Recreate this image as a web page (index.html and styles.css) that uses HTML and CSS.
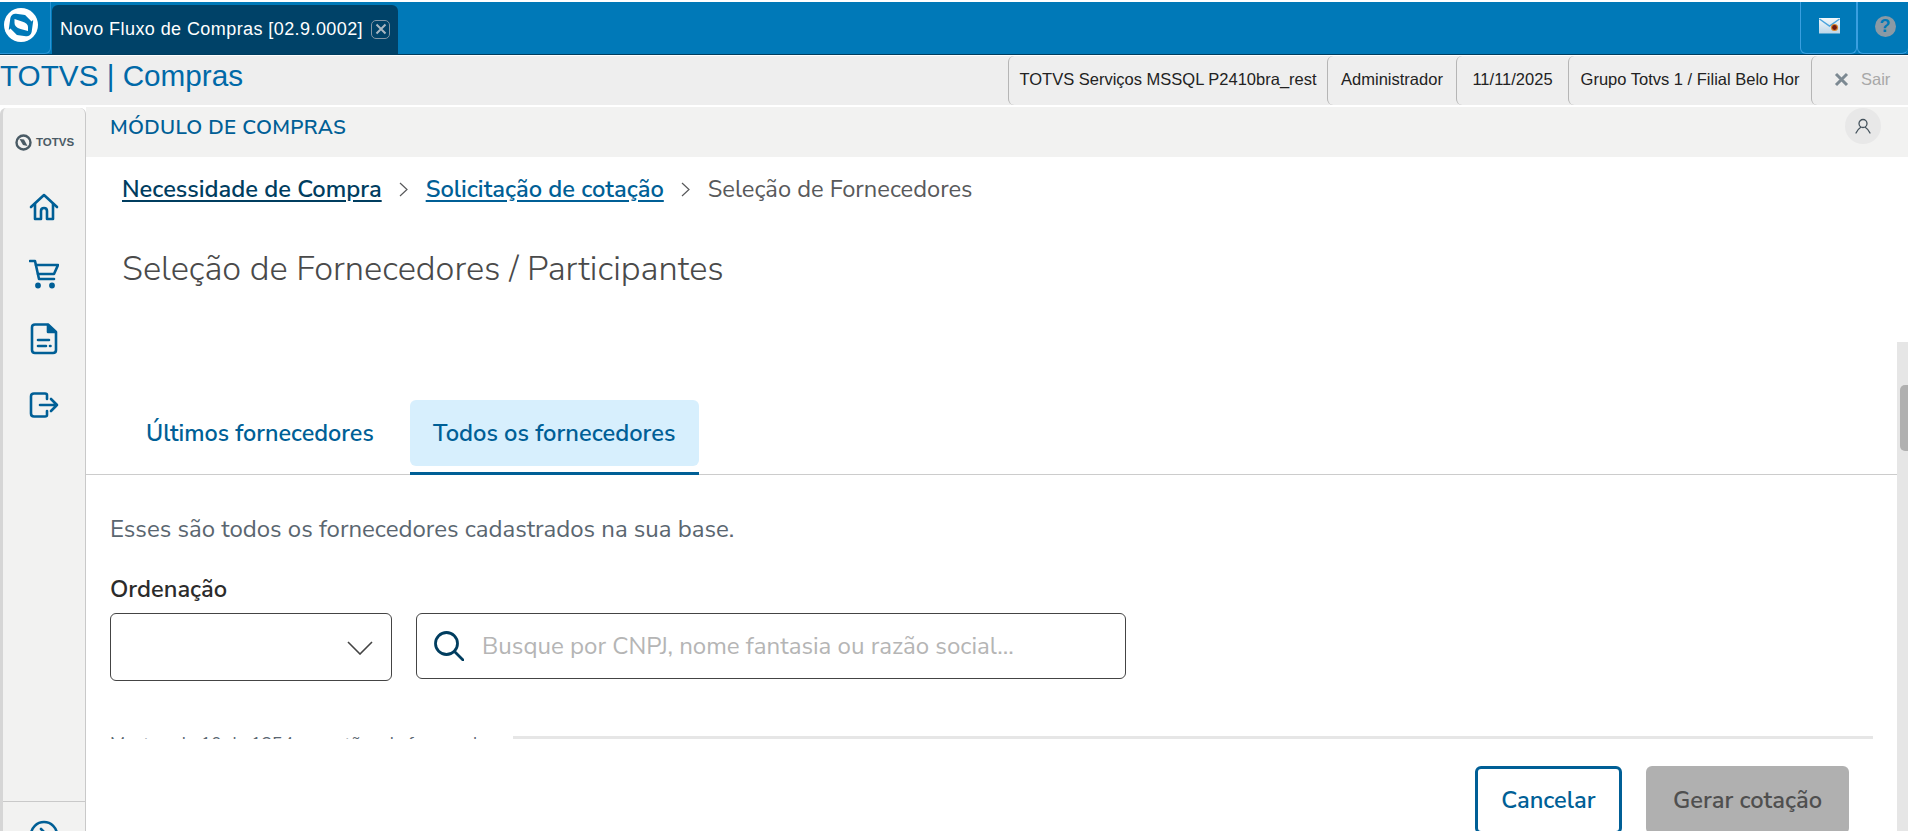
FILE: index.html
```html
<!DOCTYPE html>
<html lang="pt-BR">
<head>
<meta charset="utf-8">
<title>TOTVS | Compras</title>
<link rel="stylesheet" href="styles.css">
</head>
<body>
<header class="topbar">
  <div class="logo-box">
    <svg width="42" height="42" viewBox="0 0 42 42"><circle cx="21" cy="21" r="17" fill="#fff"/><rect x="9.500" y="10.500" width="23" height="21" rx="5" fill="#0079b8" transform="rotate(8 21 21)"/><path d="M14.500 15 L22 17.500 Q28 19 28 23 L28 27 L20.500 25 Q14.500 23 14.500 19 Z" fill="#fff"/><path d="M24 7 L33 16 M18 35 L9 26" stroke="#fff" stroke-width="4"/></svg>
  </div>
  <div class="app-tab">
    <span>Novo Fluxo de Compras [02.9.0002]</span>
    <span class="tab-close"><svg width="12" height="12" viewBox="0 0 12 12"><path d="M1.500 1.500 L10.500 10.500 M10.500 1.500 L1.500 10.500" stroke="#a9b7c2" stroke-width="2"/></svg></span>
  </div>
  <div class="top-actions">
    <div class="top-btn top-btn-mail">
      <svg width="22" height="16" viewBox="0 0 22 16"><defs><linearGradient id="mailfill" x1="0" y1="0" x2="0" y2="1"><stop offset="0" stop-color="#f4f8fb"/><stop offset="1" stop-color="#bcd6e8"/></linearGradient></defs><rect width="21" height="15.500" fill="url(#mailfill)"/><path d="M0.500 1 L10.500 8 L20.500 1" fill="none" stroke="#4aa3dc" stroke-width="1.500"/><circle cx="15.500" cy="9.500" r="3.600" fill="#d9862f"/><circle cx="15.500" cy="9.500" r="2.400" fill="#6e1a12"/></svg>
    </div>
    <div class="top-btn top-btn-help">
      <span class="help-dot">?</span>
    </div>
  </div>
</header>
<div class="infobar">
  <div class="brand">TOTVS | Compras</div>
  <div class="info-cells">
    <div class="cell cell-env">TOTVS Serviços MSSQL P2410bra_rest</div>
    <div class="cell cell-user">Administrador</div>
    <div class="cell cell-date">11/11/2025</div>
    <div class="cell cell-branch">Grupo Totvs 1 / Filial Belo Hor</div>
    <div class="cell cell-exit"><svg width="15" height="15" viewBox="0 0 15 15"><path d="M2 2 L13 13 M13 2 L2 13" stroke="#7c8992" stroke-width="3"/></svg><span class="exit-label">Sair</span></div>
  </div>
</div>
<div class="workspace">
  <aside class="sidebar">
    <div class="side-logo">
      <svg width="17" height="17" viewBox="0 0 17 17"><circle cx="8.500" cy="8.500" r="7" fill="none" stroke="#4a5b65" stroke-width="2.400"/><path d="M4.500 5 L9 5.500 L12.500 12 L8 11 Z" fill="#4a5b65"/></svg>
      <span>TOTVS</span>
    </div>
    <nav class="side-nav">
      <svg class="side-icon" width="30" height="30" viewBox="0 0 30 30" fill="none" stroke="#005f96" stroke-width="2.600" stroke-linejoin="round" stroke-linecap="round"><path d="M2 15 L15 3 L28 15"/><path d="M6 12 V27 H12 V19 Q12 16 15 16 Q18 16 18 19 V27 H24 V12"/></svg>
      <svg class="side-icon" width="30" height="30" viewBox="0 0 30 30" fill="none" stroke="#005f96" stroke-width="2.600" stroke-linejoin="round" stroke-linecap="round"><path d="M1 2 H6 L10 20 H25"/><path d="M7 6 H29 L25 15 H9"/><circle cx="9" cy="26.500" r="1.600" fill="#005f96"/><circle cx="23" cy="26.500" r="1.600" fill="#005f96"/></svg>
      <svg class="side-icon" width="30" height="32" viewBox="0 0 30 32" fill="none" stroke="#005f96" stroke-width="2.600" stroke-linejoin="round" stroke-linecap="round"><path d="M6 1.500 H19 L27 9 V27 Q27 30 24 30 H6 Q3 30 3 27 V4.500 Q3 1.500 6 1.500 Z"/><path d="M19 2 V9 H26" fill="#005f96"/><path d="M9 17 H20 M9 23 H17 M21 23 H21.500"/></svg>
      <svg class="side-icon" width="30" height="26" viewBox="0 0 30 26" fill="none" stroke="#005f96" stroke-width="2.600" stroke-linejoin="round" stroke-linecap="round"><path d="M18 7 V3 Q18 1.500 16 1.500 H5 Q2 1.500 2 4.500 V21.500 Q2 24.500 5 24.500 H16 Q18 24.500 18 23 V19"/><path d="M11 13 H28 M22 7 L28 13 L22 19"/></svg>
    </nav>
    <div class="side-foot">
      <svg width="30" height="30" viewBox="0 0 30 30" fill="none" stroke="#005f96" stroke-width="2.600" stroke-linecap="round" stroke-linejoin="round"><circle cx="15" cy="15" r="13"/><path d="M12 9 L18 15 L12 21"/></svg>
    </div>
  </aside>
  <main class="main">
    <div class="module-bar">
      <span class="module-title">MÓDULO DE COMPRAS</span>
      <span class="avatar"><svg width="16" height="16" viewBox="0 0 16 16" fill="none" stroke="#44525c" stroke-width="1.300" stroke-linecap="round"><circle cx="8" cy="5.500" r="4"/><path d="M1 15 Q3 11 5.500 9.500 M15 15 Q13 11 10.500 9.500"/></svg></span>
    </div>
    <nav class="breadcrumb">
      <a class="crumb crumb-first">Necessidade de Compra</a>
      <svg class="crumb-sep" width="9" height="15" viewBox="0 0 9 15" fill="none" stroke="#58595b" stroke-width="1.200"><path d="M1 1 L8 7.500 L1 14"/></svg>
      <a class="crumb crumb-link">Solicitação de cotação</a>
      <svg class="crumb-sep" width="9" height="15" viewBox="0 0 9 15" fill="none" stroke="#58595b" stroke-width="1.200"><path d="M1 1 L8 7.500 L1 14"/></svg>
      <span class="crumb crumb-current">Seleção de Fornecedores</span>
    </nav>
    <h1 class="page-title">Seleção de Fornecedores / Participantes</h1>
    <div class="tabs">
      <div class="tab">Últimos fornecedores</div>
      <div class="tab tab-active">Todos os fornecedores</div>
    </div>
    <section class="panel">
      <p class="lead">Esses são todos os fornecedores cadastrados na sua base.</p>
      <div class="field-label">Ordenação</div>
      <div class="filters">
        <div class="select">
          <svg width="26" height="14" viewBox="0 0 26 14" fill="none" stroke="#444" stroke-width="1.600"><path d="M1 1 L13 13 L25 1"/></svg>
        </div>
        <div class="search">
          <svg width="30" height="30" viewBox="0 0 30 30" fill="none" stroke="#003d5f" stroke-width="2.800" stroke-linecap="round"><circle cx="12.500" cy="12.500" r="11"/><path d="M20.500 20.500 L29 29"/></svg>
          <span class="placeholder">Busque por CNPJ, nome fantasia ou razão social...</span>
        </div>
      </div>
      <div class="results">
        <span class="results-text">Mostrando 10 de 1854 sugestões de fornecedores</span>
        <span class="results-line"></span>
      </div>
      <div class="actions">
        <button class="btn btn-outline">Cancelar</button>
        <button class="btn btn-disabled">Gerar cotação</button>
      </div>
    </section>
    <div class="scrollbar"><div class="scroll-thumb"></div></div>
  </main>
</div>
</body>
</html>
```
FILE: styles.css
```css
* { box-sizing: border-box; }
html, body { margin: 0; height: 831px; overflow: hidden; background: #fff; }
body {
  display: flex;
  flex-direction: column;
  padding-top: 2px;
  font-family: "Nunito Sans", "Noto Sans", sans-serif;
  color: #333;
}
.topbar {
  height: 53px;
  flex: none;
  display: flex;
  background: #0079b8;
  border-bottom: 1px solid #003d5f;
}
.logo-box {
  width: 51px;
  display: flex;
  align-items: center;
  justify-content: flex-start;
  padding-bottom: 5px;
  border-right: 1px solid #2b95d6;
  border-bottom: 1px solid #2b95d6;
  border-bottom-right-radius: 6px;
}
.app-tab {
  margin: 3px 0 0 1px;
  width: 346px;
  display: flex;
  align-items: center;
  gap: 8px;
  padding-left: 8px;
  padding-bottom: 1px;
  background: #004268;
  border-radius: 6px 6px 0 0;
  color: #fff;
  font: 18px "Liberation Sans", sans-serif;
}
.app-tab > span:first-child { letter-spacing: 0.42px; white-space: nowrap; }
.tab-close {
  width: 19px;
  height: 19px;
  flex: none;
  display: flex;
  align-items: center;
  justify-content: center;
  border: 1px solid #8496a5;
  border-radius: 5px;
}
.top-actions { margin-left: auto; display: flex; }
.top-btn {
  width: 57px;
  display: flex;
  align-items: center;
  justify-content: center;
  border: 1px solid #3a9fe0;
  border-top: 0;
  border-radius: 0 0 6px 6px;
}
.top-btn-mail { padding: 0 0 4px 3px; }
.top-btn-help { width: 51px; border-right: 0; padding: 0 0 3px 4px; }
.help-dot {
  width: 21px;
  height: 21px;
  border-radius: 50%;
  background: #8a9aa5;
  color: #0079b8;
  font: bold 18px/21px "Liberation Sans", sans-serif;
  text-align: center;
}
.infobar {
  margin-top: 1px;
  height: 49px;
  flex: none;
  display: flex;
  justify-content: space-between;
  background: #eee;
}
.brand {
  font: 29.700px/40px "Liberation Sans", sans-serif;
  color: #0069a8;
  white-space: nowrap;
}
.info-cells { display: flex; font: 16.500px "Liberation Sans", sans-serif; color: #222; }
.cell {
  display: flex;
  align-items: center;
  justify-content: center;
  padding-bottom: 2px;
  border-left: 1px solid #b5b5b5;
  border-radius: 6px 0 0 6px;
  white-space: nowrap;
}
.cell-env { width: 319px; }
.cell-user { width: 129px; }
.cell-date { width: 112px; }
.cell-branch { width: 243px; }
.cell-exit { width: 97px; justify-content: flex-start; padding-left: 22px; gap: 12px; color: #a8a8a8; }
.workspace {
  margin-top: 2px;
  flex: 1;
  min-height: 0;
  display: flex;
}
.sidebar {
  width: 86px;
  flex: none;
  margin-top: 1px;
  display: flex;
  flex-direction: column;
  background: #f2f2f1;
  border-left: 3px solid #d6d6d6;
  border-right: 1px solid #c9c9c9;
  border-radius: 6px 6px 0 0;
}
.side-logo {
  height: 84px;
  padding: 0 0 16px 12px;
  display: flex;
  align-items: center;
  gap: 4px;
  font: bold 11.500px "Liberation Sans", sans-serif;
  color: #4a5b65;
}
.side-nav {
  display: flex;
  flex-direction: column;
  align-items: center;
  gap: 33px;
  flex: 1;
  padding-top: 0;
}
.side-icon { display: block; }
.side-nav svg:nth-child(2) { margin-top: 4px; }
.side-nav svg:nth-child(3) { margin-top: 1px; }
.side-nav svg:nth-child(4) { margin-top: 4px; }
.side-foot {
  border-top: 1px solid #c9c9c9;
  padding-top: 18px;
  height: 60px;
  flex: none;
  margin-bottom: -30px;
  display: flex;
  justify-content: center;
}
.main {
  position: relative;
  flex: 1;
  min-width: 0;
  display: flex;
  flex-direction: column;
}
.module-bar {
  height: 50px;
  flex: none;
  display: flex;
  align-items: center;
  justify-content: space-between;
  padding: 0 27px 0 24px;
  background: #f2f2f1;
}
.module-title { font-size: 20.600px; font-weight: 600; color: #005f96; letter-spacing: 0.3px; padding-bottom: 10px; }
.avatar {
  width: 36px;
  height: 36px;
  border-radius: 50%;
  background: #e8e8e8;
  display: flex;
  align-items: center;
  justify-content: center;
  margin-top: -12px;
}
.breadcrumb {
  height: 64px;
  flex: none;
  display: flex;
  align-items: center;
  padding: 0 0 0 36px;
  font-size: 23.700px;
}
.crumb { white-space: nowrap; }
.crumb-sep { margin: 0 18px 0 17px; }
.crumb-first { color: #003d5f; font-weight: 600; text-decoration: underline; text-underline-offset: 3px; }
.crumb-link { color: #005f96; font-weight: 600; text-decoration: underline; text-underline-offset: 3px; }
.crumb-current { color: #58595b; }
.page-title {
  margin: 0 0 0 36px;
  height: 179px;
  font-size: 34.400px;
  font-weight: 300;
  line-height: 96px;
  color: #4a4a4a;
  white-space: nowrap;
}
.tabs {
  height: 75px;
  flex: none;
  display: flex;
  padding-left: 36px;
  gap: 12px;
  border-bottom: 1px solid #ccc;
}
.tab {
  height: 66px;
  padding: 0 24px;
  display: flex;
  align-items: center;
  font-size: 23.400px;
  font-weight: 600;
  color: #005f96;
  white-space: nowrap;
  border-radius: 6px;
}
.tab-active {
  position: relative;
  background: #d7effd;
  width: 289px;
  justify-content: center;
  padding: 0;
  font-size: 23.700px;
}
.tab-active::after {
  content: "";
  position: absolute;
  left: 0;
  right: 0;
  bottom: -9px;
  height: 3px;
  background: #005f96;
}
.panel { padding: 0 35px 0 24px; flex: 1; min-height: 0; }
.lead { margin: 37px 0 0; font-size: 24px; line-height: 34px; color: #5a6670; white-space: nowrap; }
.field-label { margin-top: 28px; font-size: 23.700px; font-weight: 600; line-height: 30px; color: #2b2b2b; }
.filters { margin-top: 9px; display: flex; align-items: flex-start; gap: 24px; }
.select {
  width: 282px;
  height: 68px;
  display: flex;
  align-items: center;
  justify-content: flex-end;
  padding: 2px 18px 0 0;
  border: 1px solid #444;
  border-radius: 6px;
}
.search {
  width: 710px;
  height: 66px;
  display: flex;
  align-items: center;
  gap: 18px;
  padding-left: 17px;
  border: 1px solid #444;
  border-radius: 6px;
}
.placeholder { font-size: 24.100px; color: #b5b5b5; white-space: nowrap; }
.results {
  margin-top: 52px;
  height: 6px;
  display: flex;
  overflow: hidden;
}
.results-text { font-size: 17.800px; line-height: 22px; color: #5a6670; white-space: nowrap; margin-right: 2px; }
.results-line { flex: 1; height: 3px; margin-top: 3px; background: #e6e6e6; }
.actions {
  margin-top: 27px;
  display: flex;
  justify-content: flex-end;
  gap: 24px;
  padding-right: 24px;
}
.btn {
  height: 68px;
  font: 600 23.700px "Nunito Sans", "Noto Sans", sans-serif;
  border-radius: 6px;
}
.btn-outline { width: 147px; background: #fff; border: 3px solid #005f96; color: #005f96; }
.btn-disabled { width: 203px; background: #b0b0b0; border: 0; color: #4f4f4f; }
.scrollbar {
  position: absolute;
  right: 0;
  top: 235px;
  bottom: 0;
  width: 11px;
  padding: 43px 0 0 3px;
  background: #e6e6e6;
}
.scroll-thumb { height: 66px; background: #b0b0b0; border-radius: 5px 0 0 5px; }
```
